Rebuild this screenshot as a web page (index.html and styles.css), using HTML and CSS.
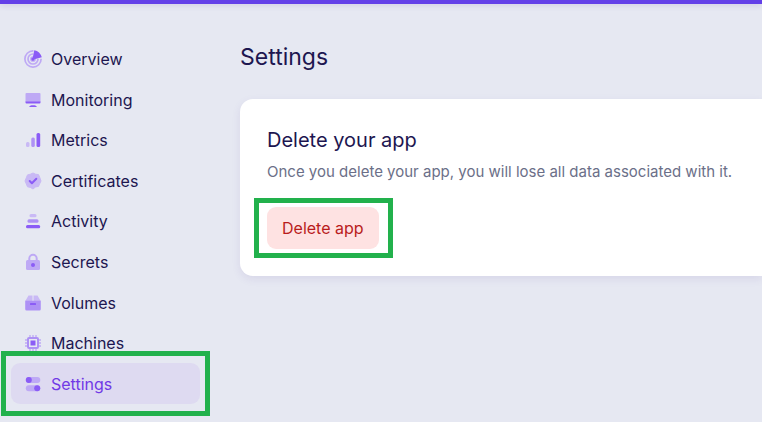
FILE: index.html
```html
<!DOCTYPE html>
<html lang="en">
<head>
<meta charset="utf-8">
<meta name="viewport" content="width=device-width, initial-scale=1">
<title>Settings</title>
<link rel="stylesheet" href="styles.css">
</head>
<body>
<div class="topbar"></div>
<div class="layout">
  <nav class="sidebar" aria-label="App">
    <a class="item" href="#overview">
      <svg class="icon" viewBox="0 0 18 18"><g class="line"><circle cx="9" cy="9" r="8.100"/><circle cx="9" cy="9" r="5"/><circle cx="9" cy="9" r="2"/></g><path class="gap" d="M9 9 9.600-.5H18.500V8.800Z"/><path class="dark" d="M10.300.2Q16 1.300 17.800 7.300L10.500 9.300A1.600 1.600 0 1 1 8.800 7.500Z"/></svg>
      Overview</a>
    <a class="item" href="#monitoring">
      <svg class="icon" viewBox="0 0 18 18"><path class="light" d="M2.500 2h13q1 0 1 1v8h-15V3q0-1 1-1Z"/><path class="dark" d="M1.500 10.500h15v1q0 1-1 1h-13q-1 0-1-1ZM5 16q1-1.500 2.500-1.700h3Q12 14.500 13 16Z"/></svg>
      Monitoring</a>
    <a class="item" href="#metrics">
      <svg class="icon" viewBox="0 0 18 18"><rect class="pale" x="2" y="11" width="3.500" height="5" rx="1.500"/><rect class="mid" x="7.300" y="6.500" width="3.500" height="9.500" rx="1.500"/><rect class="dark" x="12.500" y="2" width="3.700" height="14" rx="1.500"/></svg>
      Metrics</a>
    <a class="item" href="#certificates">
      <svg class="icon" viewBox="0 0 18 18"><path class="pale round" d="m9 1 2.600 1.200 2.900.4 1.200 2.700L17 9l-1.300 2.700-1.200 2.700-2.900.5L9 17l-2.600-1.600-2.900-.6-1.200-2.900L1 9l1.300-3.200 1.200-2.900 2.900-.7Z"/><path class="check" d="m5.700 9 2.200 2.200 4.400-4.400"/></svg>
      Certificates</a>
    <a class="item" href="#activity">
      <svg class="icon" viewBox="0 0 18 18"><rect class="pale" x="5.500" y="2" width="7" height="3.200" rx="1.500"/><rect class="mid" x="3.500" y="7.300" width="11" height="3.500" rx="1.500"/><rect class="dark" x="2" y="13" width="14.200" height="3.200" rx="1.500"/></svg>
      Activity</a>
    <a class="item" href="#secrets">
      <svg class="icon" viewBox="0 0 18 18"><path class="shackle" d="M5.300 8V5.500a3.700 3.700 0 0 1 7.400 0V8"/><rect class="light" x="2" y="7" width="14" height="10" rx="1.500"/><circle class="dark" cx="9" cy="12" r="2"/></svg>
      Secrets</a>
    <a class="item" href="#volumes">
      <svg class="icon" viewBox="0 0 18 18"><path class="pale" d="M4.500 1.500h4V7H1.300ZM9.500 1.500h4L16.700 7H9.500Z"/><path class="mid" d="M1.200 6.700h15.600V15q0 1.500-1.500 1.500H2.700Q1.200 16.500 1.200 15Z"/><rect class="dark" x="6" y="9" width="6" height="2" rx=".5"/></svg>
      Volumes</a>
    <a class="item" href="#machines">
      <svg class="icon" viewBox="0 0 18 18"><path class="pins" d="M6 1v16M9 1v16M12 1v16M1 6h16M1 9h16M1 12h16"/><rect class="chip" x="4" y="4" width="10" height="10" rx="1"/><rect class="dark" x="6.500" y="6.500" width="5" height="5"/></svg>
      Machines</a>
    <a class="item active" href="#settings" aria-current="page">
      <svg class="icon" viewBox="0 0 18 18"><rect class="light" x="1.800" y="2" width="14.500" height="6" rx="3"/><circle class="dark" cx="4.800" cy="5" r="3"/><rect class="light" x="1.800" y="10.300" width="14.500" height="6" rx="3"/><circle class="dark" cx="13.200" cy="13.300" r="3"/></svg>
      Settings<span class="marker marker-nav"></span></a>
  </nav>
  <main class="content">
    <h1>Settings</h1>
    <section class="card">
      <h2>Delete your app</h2>
      <p>Once you delete your app, you will lose all data associated with it.</p>
      <div class="action"><button type="button">Delete app</button><span class="marker marker-action"></span></div>
    </section>
  </main>
</div>
</body>
</html>
```
FILE: styles.css
```css
* { box-sizing: border-box; }
body {
  margin: 0;
  min-height: 100vh;
  background: #e6e8f2;
  color: #1d1650;
  font: 16px/24px Inter, "Liberation Sans", sans-serif;
}
.topbar {
  height: 4px;
  background: #633fe8;
  box-shadow: 0 1px 6px rgba(90, 50, 150, .2);
}
.layout {
  display: grid;
  grid-template-columns: 189px minmax(0, 1fr);
  column-gap: 40px;
  padding: 35px 0 16px 11px;
}
.sidebar {
  display: grid;
  grid-auto-rows: 1fr;
  align-self: start;
  min-height: 365px;
}
.item {
  position: relative;
  display: flex;
  align-items: center;
  gap: 9px;
  padding: 0 13px;
  border-radius: 9px;
  color: inherit;
  text-decoration: none;
}
.active { background: #dedaf1; color: #7139e6; }
.icon { width: 18px; height: 18px; flex: none; }
.dark { fill: #8b5cf6; }
.mid { fill: #ae91f5; }
.light { fill: #bea9f5; }
.pale { fill: #c9b9f5; }
.gap { fill: #e6e8f2; }
.line, .shackle, .pins, .check { fill: none; stroke: #bea9f5; }
.line { stroke-width: 1.7; }
.shackle { stroke-width: 2; }
.pins { stroke-width: 1.3; }
.check { stroke: #8b5cf6; stroke-width: 2; stroke-linecap: round; stroke-linejoin: round; }
.round { stroke: #c9b9f5; stroke-linejoin: round; }
.chip { fill: #e6e8f2; stroke: #ae91f5; stroke-width: 2; }
h1, h2, p { margin: 0; font-weight: 400; }
h1 { font-size: 23px; line-height: 36px; }
.card {
  margin-top: 24px;
  padding: 27px;
  background: #fff;
  border-radius: 13px 0 0 13px;
  box-shadow: 0 3px 8px rgba(90, 60, 160, .1);
}
h2 { font-size: 20px; line-height: 28px; }
.card p { margin-top: 6px; color: #6b6f88; font-size: 15px; }
.action { position: relative; width: fit-content; margin-top: 23px; }
button {
  display: block;
  padding: 9px 15px;
  border: 0;
  border-radius: 9px;
  background: #fee2e2;
  color: #b91c1c;
  font: inherit;
}
.marker { position: absolute; border: 5px solid #22b14c; pointer-events: none; }
.marker-nav { inset: -12px -10px; }
.marker-action { inset: -9px -14px -9px -13px; }
```
